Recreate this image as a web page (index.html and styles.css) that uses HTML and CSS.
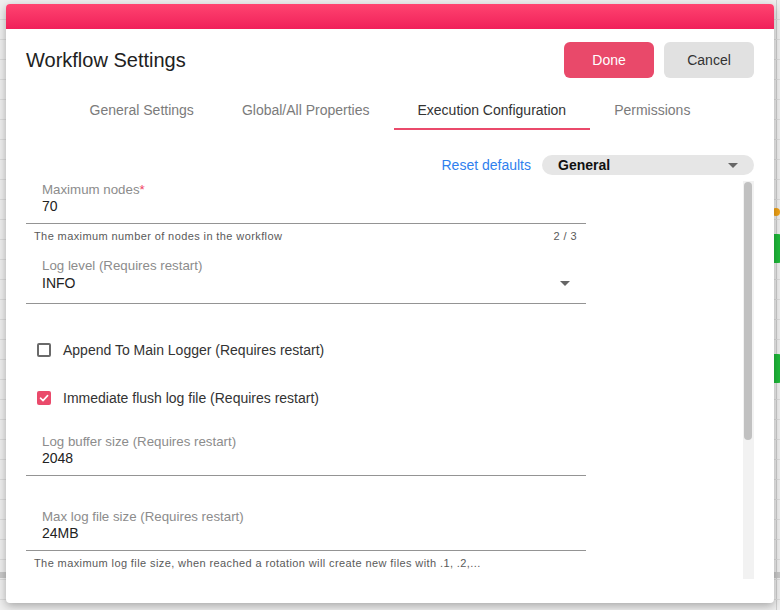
FILE: index.html
```html
<!DOCTYPE html>
<html lang="en">
<head>
<meta charset="utf-8">
<title>Workflow Settings</title>
<link rel="stylesheet" href="styles.css">
</head>
<body>
<div class="canvas">
  <div class="scroll-band"></div>
  <div class="node node-dot"></div>
  <div class="node node-green node-a"></div>
  <div class="node node-green node-b"></div>
</div>

<div class="modal">
  <div class="modal-bar"></div>
  <div class="modal-head">
    <h1 class="title">Workflow Settings</h1>
    <div class="actions">
      <button class="btn btn-primary">Done</button>
      <button class="btn btn-secondary">Cancel</button>
    </div>
  </div>

  <nav class="tabs">
    <div class="tab">General Settings</div>
    <div class="tab">Global/All Properties</div>
    <div class="tab tab-active">Execution Configuration</div>
    <div class="tab">Permissions</div>
  </nav>

  <div class="toolbar">
    <a class="reset">Reset defaults</a>
    <div class="select">
      <span class="select-text">General</span>
      <span class="caret"></span>
    </div>
  </div>

  <div class="body">
    <div class="form">
      <div class="field">
        <div class="label">Maximum nodes<span class="req">*</span></div>
        <div class="value">70</div>
      </div>
      <div class="helper"><span>The maximum number of nodes in the workflow</span><span>2 / 3</span></div>

      <div class="field field-select">
        <div class="label">Log level (Requires restart)</div>
        <div class="value value-row"><span>INFO</span><span class="caret"></span></div>
      </div>

      <div class="check-row check-first">
        <span class="checkbox"></span>
        <span class="check-label">Append To Main Logger (Requires restart)</span>
      </div>
      <div class="check-row">
        <span class="checkbox checkbox-on">
          <svg width="14" height="14" viewBox="0 0 14 14"><polyline points="3.5,7.2 6,9.6 10.6,4.6" fill="none" stroke="#fff" stroke-width="1.6" stroke-linecap="round" stroke-linejoin="round"/></svg>
        </span>
        <span class="check-label">Immediate flush log file (Requires restart)</span>
      </div>

      <div class="field field-after-check">
        <div class="label">Log buffer size (Requires restart)</div>
        <div class="value">2048</div>
      </div>
      <div class="helper helper-empty"></div>

      <div class="field">
        <div class="label">Max log file size (Requires restart)</div>
        <div class="value">24MB</div>
      </div>
      <div class="helper"><span>The maximum log file size, when reached a rotation will create new files with .1, .2,...</span></div>
    </div>
    <div class="scrollbar"><div class="thumb"></div></div>
  </div>
</div>
</body>
</html>
```

FILE: styles.css
```css
* { box-sizing: border-box; }

html, body {
  margin: 0;
  padding: 0;
  width: 780px;
  height: 610px;
  overflow: hidden;
}

body {
  font-family: "Liberation Sans", Arial, sans-serif;
  color: #222;
  background-color: #efefef;
  background-image:
    repeating-linear-gradient(to bottom, transparent 0 19px, #dcdcdc 19px 20px),
    linear-gradient(to right, transparent 0 776px, #cfcfcf 776px 777px, transparent 777px);
  position: relative;
}

.canvas {
  position: absolute;
  inset: 0;
}

.scroll-band {
  position: absolute;
  left: 0;
  top: 572px;
  width: 780px;
  height: 6px;
  background: #c9c9c9;
}

.node { position: absolute; }

.node-dot {
  left: 772px;
  top: 208px;
  width: 8px;
  height: 8px;
  border-radius: 50%;
  background: #f2a316;
}

.node-green {
  left: 760px;
  width: 30px;
  height: 29px;
  border-radius: 12px;
  background: #1fba3a;
}

.node-a { top: 234px; }
.node-b { top: 354px; }

.modal {
  position: absolute;
  left: 6px;
  top: 4px;
  width: 768px;
  height: 599px;
  background: #fff;
  border-radius: 4px;
  overflow: hidden;
  box-shadow: 0 3px 10px rgba(0, 0, 0, 0.3);
  display: flex;
  flex-direction: column;
}

.modal-bar {
  height: 25px;
  flex: none;
  background: linear-gradient(to bottom, #ff4470, #f0205a);
}

.modal-head {
  display: flex;
  align-items: center;
  justify-content: space-between;
  padding: 13px 20px 0 20px;
}

.title {
  margin: 0;
  font-size: 20px;
  font-weight: normal;
  color: #212121;
  line-height: 24px;
}

.actions {
  display: flex;
  gap: 10px;
}

.btn {
  width: 90px;
  height: 36px;
  border: none;
  border-radius: 6px;
  font-family: "Liberation Sans", Arial, sans-serif;
  font-size: 14px;
  padding: 0;
}

.btn-primary {
  background: #e9496a;
  color: #fff;
}

.btn-secondary {
  background: #e1e1e1;
  color: #333;
}

.tabs {
  display: flex;
  justify-content: center;
  margin-top: 14px;
}

.tab {
  height: 38px;
  padding: 0 24px;
  display: flex;
  align-items: center;
  font-size: 14px;
  color: #7b7b7b;
  border-bottom: 2px solid transparent;
}

.tab-active {
  color: #333;
  border-bottom-color: #ea4a6b;
}

.toolbar {
  display: flex;
  justify-content: flex-end;
  align-items: center;
  gap: 11px;
  margin-top: 25px;
  padding-right: 20px;
  height: 20px;
}

.reset {
  font-size: 14px;
  color: #2f7fee;
  text-decoration: none;
}

.select {
  width: 212px;
  height: 20px;
  border-radius: 10px;
  background: #e6e6e6;
  display: flex;
  align-items: center;
  justify-content: space-between;
  padding: 0 16px;
}

.select-text {
  font-size: 14px;
  font-weight: bold;
  color: #111;
}

.caret {
  width: 0;
  height: 0;
  border-left: 5px solid transparent;
  border-right: 5px solid transparent;
  border-top: 5px solid #666;
}

.body {
  margin-top: 6px;
  height: 398px;
  display: flex;
  justify-content: space-between;
  padding-right: 20px;
}

.form {
  padding-left: 20px;
  width: 580px;
}

.field {
  width: 560px;
  padding: 1px 16px 9px;
  border-bottom: 1px solid #949494;
}

.label {
  font-size: 13.3px;
  line-height: 16px;
  color: #8c8c8c;
}

.req { color: #f0425f; }

.value {
  font-size: 14px;
  line-height: 16px;
  color: #222;
}

.field-select {
  padding-bottom: 12px;
}

.value-row {
  display: flex;
  justify-content: space-between;
  align-items: center;
  margin-top: 1px;
}

.helper {
  display: flex;
  justify-content: space-between;
  margin-top: 6px;
  margin-bottom: 14px;
  height: 13px;
  padding: 0 9px 0 8px;
  font-size: 11px;
  line-height: 13px;
  letter-spacing: 0.4px;
  color: #5a5a5a;
}

.helper-empty { margin-bottom: 13px; }

.check-row {
  height: 48px;
  display: flex;
  align-items: center;
  padding-left: 11px;
  gap: 12px;
}

.check-first { margin-top: 22px; }

.checkbox {
  width: 14px;
  height: 14px;
  border: 2px solid #6a6a6a;
  border-radius: 2px;
  display: flex;
  align-items: center;
  justify-content: center;
}

.checkbox-on {
  border: none;
  background: #ea4a6b;
}

.check-label {
  font-size: 14px;
  color: #333;
}

.field-after-check { margin-top: 11px; }

.scrollbar {
  width: 11px;
  height: 398px;
  background: #f2f2f2;
  padding: 1px 2px 0 1px;
}

.thumb {
  width: 8px;
  height: 258px;
  border-radius: 4px;
  background: #c1c1c1;
}
```
